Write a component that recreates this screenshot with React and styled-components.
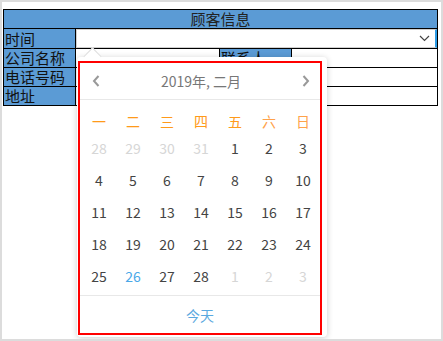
import React from 'react';
import styled, { createGlobalStyle } from 'styled-components';

const GlobalStyle = createGlobalStyle`
  html, body {
    margin: 0;
    padding: 0;
    background: #fff;
  }
  body {
    font-family: "Noto Sans CJK SC", "Liberation Sans", sans-serif;
  }
`;

const weekDays = ['一', '二', '三', '四', '五', '六', '日'];

const buildDays = () => {
  const days = [28, 29, 30, 31].map((d) => ({ d, other: true }));
  for (let i = 1; i <= 28; i++) days.push({ d: i, today: i === 26 });
  [1, 2, 3].forEach((d) => days.push({ d, other: true }));
  return days;
};

const App = () => {
  const days = buildDays();
  return (
    <Frame>
      <GlobalStyle />
      <Sheet>
        <colgroup>
          <Col $w={72} />
          <Col $w={144} />
          <Col $w={72} />
          <Col $w={146} />
        </colgroup>
        <tbody>
          <tr>
            <HeadCell colSpan={4}>顾客信息</HeadCell>
          </tr>
          <tr>
            <Label>时间</Label>
            <Cell colSpan={3}>
              <SelectBox>
                <svg width="11" height="7" viewBox="0 0 11 7">
                  <path d="M1 1 L5.5 5.5 L10 1" fill="none" stroke="#444" strokeWidth="1.2" />
                </svg>
              </SelectBox>
            </Cell>
          </tr>
          <tr>
            <Label>公司名称</Label>
            <Cell />
            <Label>联系人</Label>
            <Cell />
          </tr>
          <tr>
            <Label>电话号码</Label>
            <Cell colSpan={3} />
          </tr>
          <tr>
            <Label>地址</Label>
            <Cell colSpan={3} />
          </tr>
        </tbody>
      </Sheet>

      <Popup>
        <Arrow />
        <Calendar>
          <CalHeader>
            <Nav>
              <svg width="8" height="12" viewBox="0 0 8 12">
                <path d="M6.5 1 L2 6 L6.5 11" fill="none" stroke="#999" strokeWidth="2" />
              </svg>
            </Nav>
            <Title>2019年, 二月</Title>
            <Nav>
              <svg width="8" height="12" viewBox="0 0 8 12">
                <path d="M1.5 1 L6 6 L1.5 11" fill="none" stroke="#999" strokeWidth="2" />
              </svg>
            </Nav>
          </CalHeader>
          <Grid>
            {weekDays.map((w, i) => (
              <WeekDay key={w} $weekend={i >= 5}>{w}</WeekDay>
            ))}
            {days.map((day, i) => (
              <Day key={i} $other={day.other} $today={day.today}>
                {day.d}
              </Day>
            ))}
          </Grid>
          <Footer>今天</Footer>
        </Calendar>
      </Popup>
    </Frame>
  );
};

export default App;

const Frame = styled.div`
  position: relative;
  box-sizing: border-box;
  width: 443px;
  height: 341px;
  border: 2px solid #dcdcdc;
  padding: 7px 0 0 1px;
  background: #fff;
  overflow: hidden;
`;

const Sheet = styled.table`
  border-collapse: collapse;
  width: 434px;
  table-layout: fixed;
  font-size: 15px;
  color: #111;

  td {
    height: 18px;
    padding: 0;
    line-height: 18px;
    border: 1px solid #000;
    white-space: nowrap;
    overflow: hidden;
  }
`;

const Col = styled.col`
  width: ${({ $w }) => $w}px;
`;

const HeadCell = styled.td`
  background: #5b9bd5;
  text-align: center;
  color: #222;
`;

const Label = styled.td`
  background: #5b9bd5;
  padding-left: 1px !important;
`;

const Cell = styled.td`
  background: #fff;
`;

const SelectBox = styled.div`
  box-sizing: border-box;
  height: 19px;
  border: 1px solid #cfcfcf;
  border-right: 2px solid #2b9be6;
  display: flex;
  align-items: center;
  justify-content: flex-end;
  padding-right: 5px;
`;

const Popup = styled.div`
  position: absolute;
  left: 75px;
  top: 55px;
  width: 250px;
  height: 280px;
  background: #fff;
  border-radius: 4px;
  box-shadow: 0 1px 6px rgba(0, 0, 0, 0.2);
`;

const Arrow = styled.div`
  position: absolute;
  left: 9px;
  top: -7px;
  width: 12px;
  height: 12px;
  background: #fff;
  border-left: 1px solid #dedede;
  border-top: 1px solid #dedede;
  transform: rotate(45deg);
`;

const Calendar = styled.div`
  position: relative;
  box-sizing: border-box;
  margin: 4px 0 0 1px;
  width: 244px;
  height: 274px;
  border: 2px solid #f00;
  display: flex;
  flex-direction: column;
`;

const CalHeader = styled.div`
  height: 36px;
  display: flex;
  align-items: center;
  justify-content: space-between;
  padding: 0 10px 0 12px;
  border-bottom: 1px solid #e8e8e8;
`;

const Nav = styled.span`
  display: flex;
  align-items: center;
`;

const Title = styled.span`
  font-size: 14px;
  color: #777;
`;

const Grid = styled.div`
  display: grid;
  grid-template-columns: repeat(7, 1fr);
  grid-template-rows: 22px repeat(5, 32px);
  padding: 10px 0 3px 2px;
  border-bottom: 1px solid #e8e8e8;
`;

const WeekDay = styled.span`
  display: flex;
  align-items: center;
  justify-content: center;
  font-size: 14px;
  color: ${({ $weekend }) => ($weekend ? '#ffa24a' : '#ff9a1a')};
`;

const Day = styled.span`
  display: flex;
  align-items: center;
  justify-content: center;
  font-size: 14px;
  color: ${({ $other, $today }) => ($other ? '#d6d6d6' : $today ? '#4aa8e8' : '#444')};
`;

const Footer = styled.div`
  flex: 1;
  display: flex;
  align-items: center;
  justify-content: center;
  font-size: 14px;
  color: #5aa9e0;
`;
